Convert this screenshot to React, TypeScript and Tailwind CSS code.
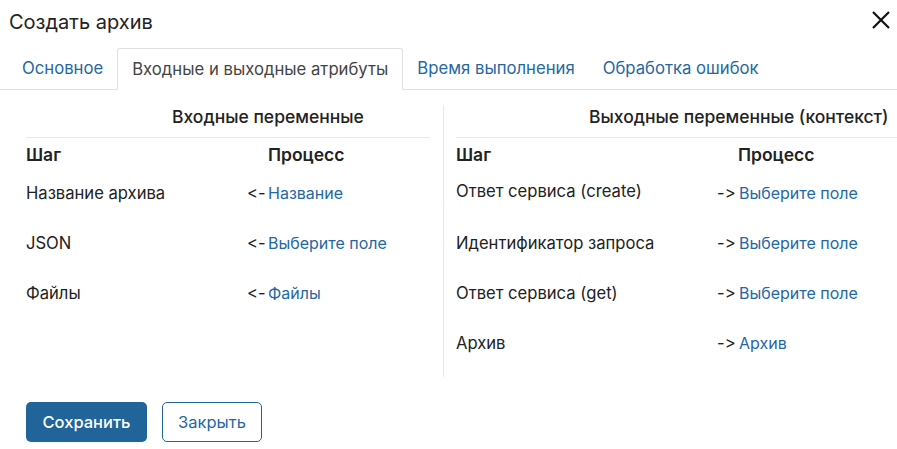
import React from 'react'

const inputs = [
  { step: 'Название архива', value: 'Название' },
  { step: 'JSON', value: 'Выберите поле' },
  { step: 'Файлы', value: 'Файлы' },
]

const outputs = [
  { step: 'Ответ сервиса (create)', value: 'Выберите поле' },
  { step: 'Идентификатор запроса', value: 'Выберите поле' },
  { step: 'Ответ сервиса (get)', value: 'Выберите поле' },
  { step: 'Архив', value: 'Архив' },
]

const App = () => {
  return (
    <div className="w-[897px] h-[449px] overflow-hidden bg-white text-[#222] font-['Inter',sans-serif] [font-feature-settings:'calt'_0]">
      {/* Header */}
      <div className="flex items-center justify-between pl-[9px] pr-[5px] pt-[5px] h-[38px]">
        <h1 className="text-[20px] leading-[26px]">Создать архив</h1>
        <button className="w-[22px] h-[22px] -mt-[4px] flex items-center justify-center text-[#111]">
          <svg width="20" height="20" viewBox="0 0 20 20" fill="none" stroke="currentColor" strokeWidth="2.2">
            <path d="M2 2 L18 18 M18 2 L2 18" />
          </svg>
        </button>
      </div>

      {/* Tabs */}
      <div className="mt-[10px] flex border-b border-[#e0e0e0] pl-[8px] text-[16.7px] leading-[20px]">
        <div className="px-[14px] py-[10px] text-[#2467a3]">Основное</div>
        <div className="px-[14px] py-[10px] -mb-px border border-[#e0e0e0] border-b-white rounded-t-[3px] bg-white text-[#444]">
          Входные и выходные атрибуты
        </div>
        <div className="px-[14px] py-[10px] text-[#2467a3]">Время выполнения</div>
        <div className="px-[14px] py-[10px] text-[#2467a3]">Обработка ошибок</div>
      </div>

      {/* Body */}
      <div className="flex pt-[17px] pl-[26px] text-[16.6px] leading-[20px]">
        <div className="w-[404px] shrink-0">
          <div className="pl-[146px] pb-[10px] text-[17.5px] font-medium border-b border-[#e8e8e8]">Входные переменные</div>
          <div className="flex pt-[7px] text-[17.5px] font-semibold">
            <div className="w-[242px]">Шаг</div>
            <div>Процесс</div>
          </div>
          {inputs.map((row, i) => (
            <div key={i} className="flex items-start h-[50px] pt-[18px]">
              <div className="w-[221px]">{row.step}</div>
              <div className="w-[21px]">&lt;-</div>
              <div className="text-[#2467a3] text-[16px]">{row.value}</div>
            </div>
          ))}
        </div>
        <div className="ml-[13px] w-px h-[272px] -mt-[2px] bg-[#e8e8e8] shrink-0" />
        <div className="ml-[12px] grow min-w-0">
          <div className="pl-[133px] pb-[10px] text-[17.5px] font-medium border-b border-[#e8e8e8] whitespace-nowrap">Выходные переменные (контекст)</div>
          <div className="flex pt-[7px] text-[17.5px] font-semibold">
            <div className="w-[282px]">Шаг</div>
            <div>Процесс</div>
          </div>
          {outputs.map((row, i) => (
            <div key={i} className="flex items-start h-[50px] pt-[18px]">
              <div className={`w-[261px] ${i === 0 ? '-mt-[2px]' : ''}`}>{row.step}</div>
              <div className="w-[22px]">-&gt;</div>
              <div className="text-[#2467a3] text-[16px]">{row.value}</div>
            </div>
          ))}
        </div>
      </div>

      {/* Footer */}
      <div className="flex gap-[15px] pl-[26px] mt-[25px]">
        <button className="h-[40px] w-[121px] rounded-[5px] bg-[#206499] text-white text-[16.5px] font-medium">Сохранить</button>
        <button className="h-[40px] w-[100px] rounded-[5px] border border-[#206499] text-[#2467a3] text-[16.5px]">Закрыть</button>
      </div>
    </div>
  )
}

export default App
